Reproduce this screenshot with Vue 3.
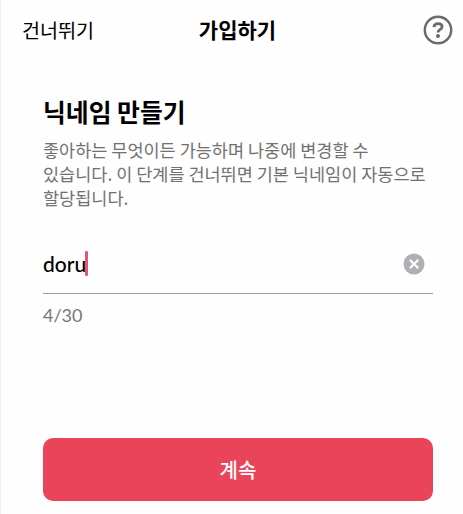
<template>
  <div class="page">
    <header class="navbar">
      <button class="skip">건너뛰기</button>
      <h1 class="nav-title">가입하기</h1>
      <button class="help" aria-label="도움말">
        <svg width="30" height="30" viewBox="0 0 30 30" fill="none">
          <circle cx="15" cy="15" r="13.2" stroke="#6a6a6a" stroke-width="2.4" />
          <path
            d="M10.9 12.1C11.2 9.8 12.8 8.7 15.1 8.7C17.5 8.7 19.1 9.9 19.1 11.8C19.1 13.5 17.9 14.2 16.7 14.9C15.5 15.6 15 16.1 15 17.5"
            stroke="#6a6a6a"
            stroke-width="2.8"
          />
          <circle cx="15" cy="20.9" r="2" fill="#6a6a6a" />
        </svg>
      </button>
    </header>

    <main class="content">
      <h2 class="heading">닉네임 만들기</h2>
      <p class="desc">
        <span v-for="line in descLines" :key="line" class="line">{{ line }}</span>
      </p>

      <div class="field">
        <span class="value">{{ nickname }}</span>
        <span class="caret"></span>
        <button class="clear" aria-label="지우기" @click="nickname = ''">
          <svg width="22" height="22" viewBox="0 0 22 22" fill="none">
            <circle cx="11" cy="11" r="10.5" fill="#afb0b4" />
            <path d="M7.5 7.5L14.5 14.5M14.5 7.5L7.5 14.5" stroke="#fff" stroke-width="2.3" stroke-linecap="round" />
          </svg>
        </button>
      </div>
      <div class="count">{{ nickname.length }}/{{ maxLength }}</div>

      <button class="submit">계속</button>
    </main>
  </div>
</template>

<script setup>
import { ref } from 'vue'

const maxLength = 30
const nickname = ref('doru')

// 설명 문구 (줄 단위)
const descLines = [
  '좋아하는 무엇이든 가능하며 나중에 변경할 수',
  '있습니다. 이 단계를 건너뛰면 기본 닉네임이 자동으로',
  '할당됩니다.'
]
</script>

<style>
body {
  background: #fefefe;
}
</style>

<style scoped>
.page {
  box-sizing: border-box;
  height: 514px;
  border-left: 1px solid #f3f3f3;
  background: #fefefe;
  color: #000;
  font-family: 'Noto Sans CJK KR', sans-serif;
  overflow: hidden;
}
button {
  padding: 0;
  border: 0;
  background: none;
  color: inherit;
  font-family: inherit;
}
.navbar {
  display: grid;
  grid-template-columns: 1fr auto 1fr;
  align-items: center;
  height: 60px;
  padding: 0 10px 0 21px;
}
.skip {
  justify-self: start;
  font-size: 19.6px;
  line-height: 28px;
}
.nav-title {
  margin: 0;
  padding-bottom: 2px;
  font-size: 21px;
  font-weight: 700;
  line-height: 28px;
}
.help {
  justify-self: end;
  height: 30px;
}
.help svg,
.clear svg {
  display: block;
}
.content {
  padding: 33px 30px 0 42px;
}
.heading {
  margin: 0;
  font-size: 24.8px;
  font-weight: 700;
  line-height: 36px;
}
.desc {
  margin: 9px 0 0;
  color: #717171;
  font-size: 17.5px;
  line-height: 24px;
}
.line {
  display: block;
  white-space: nowrap;
}
.field {
  display: flex;
  align-items: center;
  height: 59px;
  margin-top: 24px;
  padding-right: 8px;
  border-bottom: 1px solid #a0a0a0;
}
.value {
  font-family: Lato, sans-serif;
  font-size: 21px;
  font-weight: 500;
}
.caret {
  width: 3px;
  height: 25px;
  margin-left: -1px;
  border-radius: 1px;
  background: #e3596c;
}
.clear {
  margin-left: auto;
}
.count {
  margin-top: 8px;
  color: #777;
  font-family: Lato, sans-serif;
  font-size: 18px;
  line-height: 26px;
}
.submit {
  display: block;
  width: 100%;
  height: 63px;
  margin-top: 110px;
  padding-bottom: 1px;
  border-radius: 10px;
  background: #ea445a;
  color: #fff;
  font-size: 20px;
  font-weight: 500;
}
</style>
